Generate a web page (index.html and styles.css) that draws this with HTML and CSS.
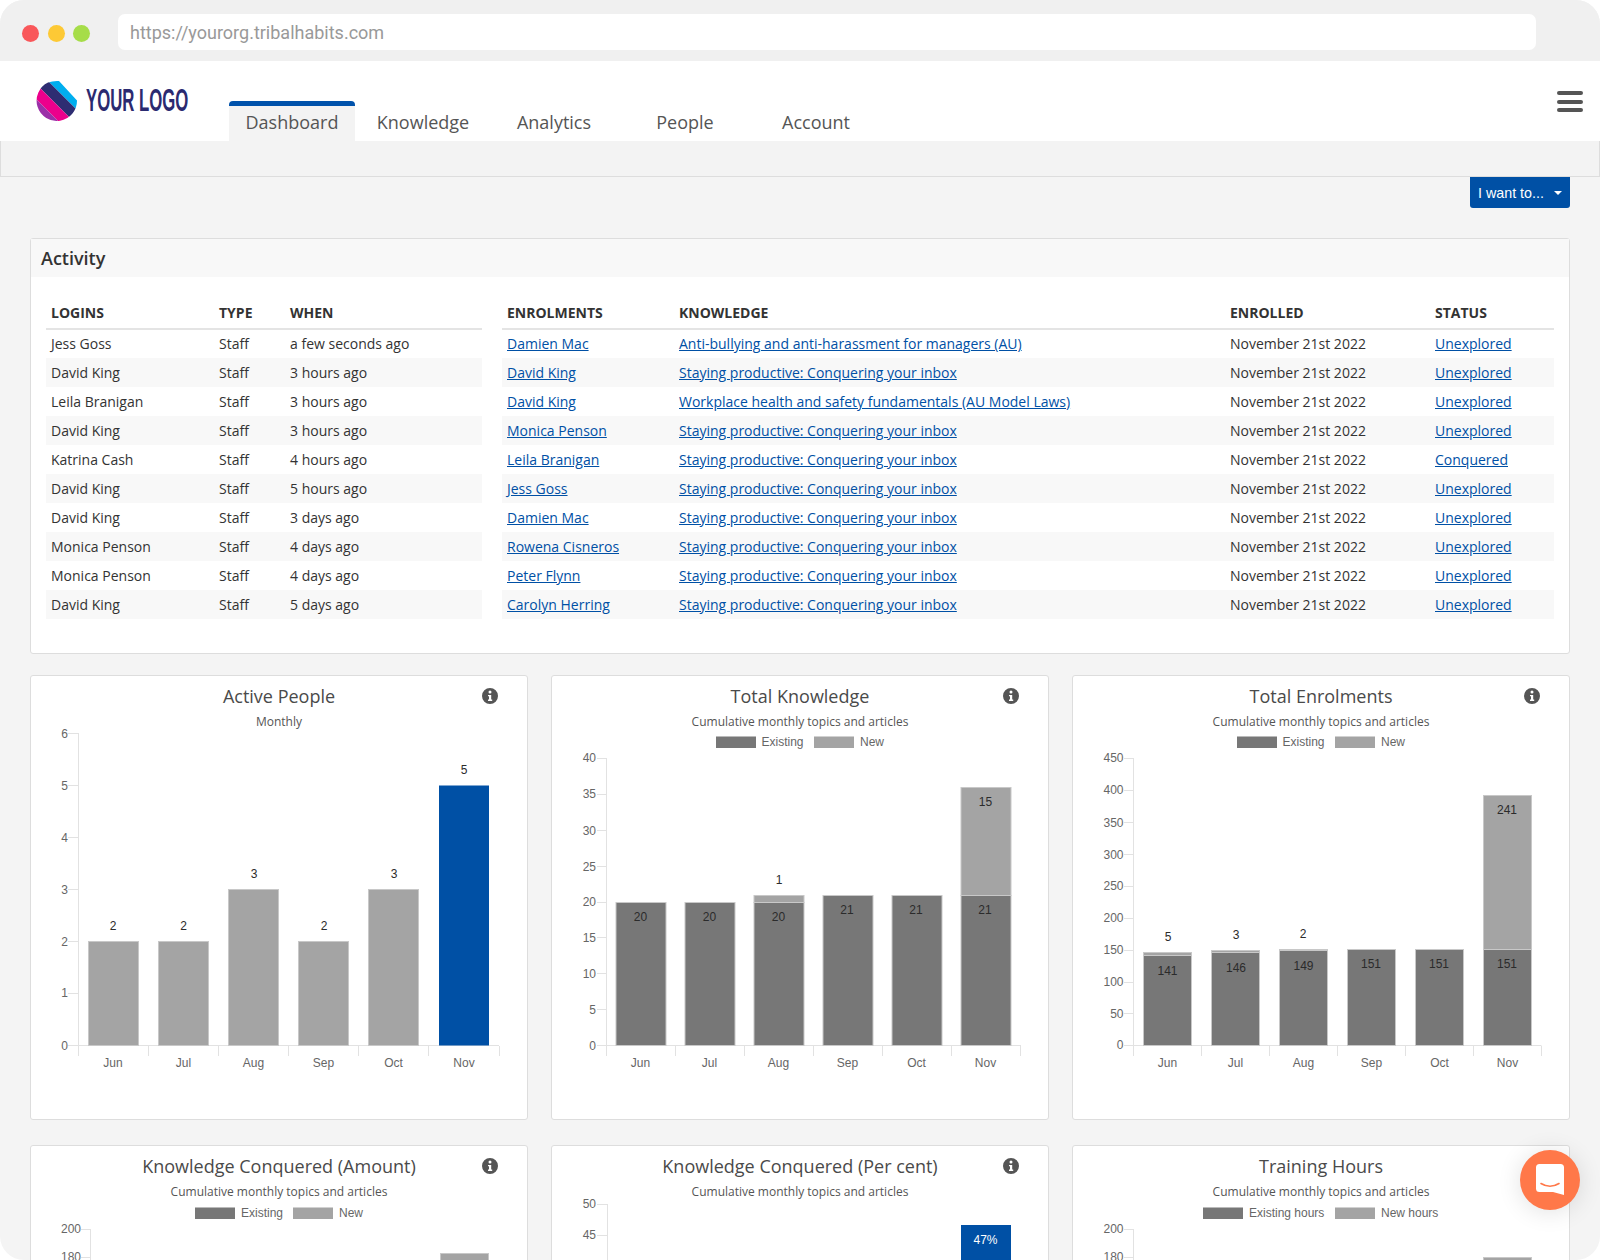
FILE: index.html
```html
<!DOCTYPE html>
<html lang="en">
<head>
<meta charset="utf-8">
<title>Dashboard</title>
<link rel="stylesheet" href="styles.css">
</head>
<body>
<div class="window">
  <div class="browser-bar">
    <div class="dots"><span class="dot dot-red"></span><span class="dot dot-yellow"></span><span class="dot dot-green"></span></div>
    <div class="url">https://yourorg.tribalhabits.com</div>
  </div>

  <header class="site-header">
    <div class="logo">
      <svg class="logo-mark" width="42" height="42" viewBox="0 0 42 42">
        <defs><clipPath id="logoClip"><path d="M12 1.6Q16 0 21 0H23L41 19.5A20.2 20.2 0 1 1 12 1.6Z"/></clipPath></defs>
        <g clip-path="url(#logoClip)">
          <polygon fill="#00aeef" points="2,-10 62,50 100,50 100,-10"/>
          <polygon fill="#2e2d72" points="2,-10 62,50 47,50 -13,-10"/>
          <polygon fill="#ec008c" points="-13,-10 47,50 32,50 -28,-10"/>
          <polygon fill="#9b30a8" points="-28,-10 32,50 -50,50 -50,-10"/>
        </g>
      </svg>
      <span class="logo-text">YOUR LOGO</span>
    </div>
    <nav class="tabs">
      <a class="tab tab-active">Dashboard</a>
      <a class="tab">Knowledge</a>
      <a class="tab">Analytics</a>
      <a class="tab">People</a>
      <a class="tab">Account</a>
    </nav>
    <div class="hamburger"><span></span><span></span><span></span></div>
  </header>

  <div class="subnav"></div>

  <div class="actions">
    <button class="want-btn">I want to...<span class="caret"></span></button>
  </div>

  <main class="content">
    <section class="activity">
      <h2 class="activity-head">Activity</h2>
      <div class="activity-body">
        <table class="tbl tbl-logins">
          <colgroup><col class="c-l1"><col class="c-l2"><col></colgroup>
          <thead><tr><th>Logins</th><th>Type</th><th>When</th></tr></thead>
          <tbody>
            <tr><td>Jess Goss</td><td>Staff</td><td>a few seconds ago</td></tr>
            <tr><td>David King</td><td>Staff</td><td>3 hours ago</td></tr>
            <tr><td>Leila Branigan</td><td>Staff</td><td>3 hours ago</td></tr>
            <tr><td>David King</td><td>Staff</td><td>3 hours ago</td></tr>
            <tr><td>Katrina Cash</td><td>Staff</td><td>4 hours ago</td></tr>
            <tr><td>David King</td><td>Staff</td><td>5 hours ago</td></tr>
            <tr><td>David King</td><td>Staff</td><td>3 days ago</td></tr>
            <tr><td>Monica Penson</td><td>Staff</td><td>4 days ago</td></tr>
            <tr><td>Monica Penson</td><td>Staff</td><td>4 days ago</td></tr>
            <tr><td>David King</td><td>Staff</td><td>5 days ago</td></tr>
          </tbody>
        </table>
        <table class="tbl tbl-enrol">
          <colgroup><col class="c-e1"><col class="c-e2"><col class="c-e3"><col></colgroup>
          <thead><tr><th>Enrolments</th><th>Knowledge</th><th>Enrolled</th><th>Status</th></tr></thead>
          <tbody>
            <tr><td><a href="#">Damien Mac</a></td><td><a href="#">Anti-bullying and anti-harassment for managers (AU)</a></td><td>November 21st 2022</td><td><a href="#">Unexplored</a></td></tr>
            <tr><td><a href="#">David King</a></td><td><a href="#">Staying productive: Conquering your inbox</a></td><td>November 21st 2022</td><td><a href="#">Unexplored</a></td></tr>
            <tr><td><a href="#">David King</a></td><td><a href="#">Workplace health and safety fundamentals (AU Model Laws)</a></td><td>November 21st 2022</td><td><a href="#">Unexplored</a></td></tr>
            <tr><td><a href="#">Monica Penson</a></td><td><a href="#">Staying productive: Conquering your inbox</a></td><td>November 21st 2022</td><td><a href="#">Unexplored</a></td></tr>
            <tr><td><a href="#">Leila Branigan</a></td><td><a href="#">Staying productive: Conquering your inbox</a></td><td>November 21st 2022</td><td><a href="#">Conquered</a></td></tr>
            <tr><td><a href="#">Jess Goss</a></td><td><a href="#">Staying productive: Conquering your inbox</a></td><td>November 21st 2022</td><td><a href="#">Unexplored</a></td></tr>
            <tr><td><a href="#">Damien Mac</a></td><td><a href="#">Staying productive: Conquering your inbox</a></td><td>November 21st 2022</td><td><a href="#">Unexplored</a></td></tr>
            <tr><td><a href="#">Rowena Cisneros</a></td><td><a href="#">Staying productive: Conquering your inbox</a></td><td>November 21st 2022</td><td><a href="#">Unexplored</a></td></tr>
            <tr><td><a href="#">Peter Flynn</a></td><td><a href="#">Staying productive: Conquering your inbox</a></td><td>November 21st 2022</td><td><a href="#">Unexplored</a></td></tr>
            <tr><td><a href="#">Carolyn Herring</a></td><td><a href="#">Staying productive: Conquering your inbox</a></td><td>November 21st 2022</td><td><a href="#">Unexplored</a></td></tr>
          </tbody>
        </table>
      </div>
    </section>

    <div class="chart-grid">
      <!-- Active People -->
      <article class="chart-card">
        <svg class="info" viewBox="0 0 16 16"><path fill-rule="evenodd" d="M8 0a8 8 0 1 1 0 16A8 8 0 0 1 8 0ZM8 2.6a1.5 1.5 0 1 0 0 3 1.5 1.5 0 0 0 0-3ZM6 6.9v1.4h1v3.3H6V13h4.2v-1.4H9.2V6.9Z"/></svg>
        <h3 class="chart-title">Active People</h3>
        <p class="chart-sub">Monthly</p>
        <svg class="chart" viewBox="31 728 496 391">
          <path class="axis" d="M78.5 733V1056M68 733.5H78M68 785.5H78M68 837.5H78M68 889.5H78M68 941.5H78M68 993.5H78M68 1045.5H499M148.5 1046V1056M218.5 1046V1056M288.5 1046V1056M358.5 1046V1056M428.5 1046V1056M499.5 1046V1056"/>
          <g class="tick-y">
            <text x="68" y="734">6</text><text x="68" y="786">5</text><text x="68" y="838">4</text><text x="68" y="890">3</text><text x="68" y="942">2</text><text x="68" y="993">1</text><text x="68" y="1045.5">0</text>
          </g>
          <g class="tick-x">
            <text x="113" y="1063">Jun</text><text x="183.5" y="1063">Jul</text><text x="253.5" y="1063">Aug</text><text x="323.5" y="1063">Sep</text><text x="393.5" y="1063">Oct</text><text x="464" y="1063">Nov</text>
          </g>
          <rect class="bar-light" x="88.5" y="941.5" width="50" height="104"/>
          <rect class="bar-light" x="158.5" y="941.5" width="50" height="104"/>
          <rect class="bar-light" x="228.5" y="889.5" width="50" height="156"/>
          <rect class="bar-light" x="298.5" y="941.5" width="50" height="104"/>
          <rect class="bar-light" x="368.5" y="889.5" width="50" height="156"/>
          <rect class="bar-blue" x="439" y="785.5" width="50" height="260"/>
          <g class="val">
            <text x="113" y="926">2</text><text x="183.5" y="926">2</text><text x="254" y="874">3</text><text x="324" y="926">2</text><text x="394" y="874">3</text><text x="464" y="770">5</text>
          </g>
        </svg>
      </article>

      <!-- Total Knowledge -->
      <article class="chart-card">
        <svg class="info" viewBox="0 0 16 16"><path fill-rule="evenodd" d="M8 0a8 8 0 1 1 0 16A8 8 0 0 1 8 0ZM8 2.6a1.5 1.5 0 1 0 0 3 1.5 1.5 0 0 0 0-3ZM6 6.9v1.4h1v3.3H6V13h4.2v-1.4H9.2V6.9Z"/></svg>
        <h3 class="chart-title">Total Knowledge</h3>
        <p class="chart-sub">Cumulative monthly topics and articles</p>
        <svg class="chart" viewBox="552 728 496 391">
          <rect class="swatch-dark" x="716" y="736.5" width="40" height="11.5"/><text class="legend" x="761.5" y="742">Existing</text>
          <rect class="swatch-light" x="814" y="736.5" width="40" height="11.5"/><text class="legend" x="860" y="742">New</text>
          <path class="axis" d="M606.5 758V1056M597 758.5H607M597 794.5H607M597 830.5H607M597 866.5H607M597 902.5H607M597 937.5H607M597 973.5H607M597 1009.5H607M597 1045.5H1021M675.5 1046V1056M744.5 1046V1056M813.5 1046V1056M882.5 1046V1056M951.5 1046V1056M1020.5 1046V1056"/>
          <g class="tick-y">
            <text x="596" y="758">40</text><text x="596" y="794">35</text><text x="596" y="830.5">30</text><text x="596" y="866.5">25</text><text x="596" y="902">20</text><text x="596" y="938">15</text><text x="596" y="974">10</text><text x="596" y="1009.5">5</text><text x="596" y="1046">0</text>
          </g>
          <g class="tick-x">
            <text x="640.5" y="1063">Jun</text><text x="709.5" y="1063">Jul</text><text x="778.5" y="1063">Aug</text><text x="847.5" y="1063">Sep</text><text x="916.5" y="1063">Oct</text><text x="985.5" y="1063">Nov</text>
          </g>
          <rect class="bar-dark" x="616" y="902.5" width="50" height="143"/>
          <rect class="bar-dark" x="685" y="902.5" width="50" height="143"/>
          <rect class="bar-light" x="754" y="895.5" width="50" height="7"/>
          <rect class="bar-dark" x="754" y="902.5" width="50" height="143"/>
          <rect class="bar-dark" x="823" y="895.5" width="50" height="150"/>
          <rect class="bar-dark" x="892" y="895.5" width="50" height="150"/>
          <rect class="bar-light" x="961" y="787.5" width="50" height="108"/>
          <rect class="bar-dark" x="961" y="895.5" width="50" height="150"/>
          <g class="val">
            <text x="640.5" y="917">20</text><text x="709.5" y="917">20</text><text x="778.5" y="917">20</text><text x="779" y="880">1</text><text x="847" y="910">21</text><text x="916" y="910">21</text><text x="985" y="910">21</text><text x="985.5" y="802">15</text>
          </g>
        </svg>
      </article>

      <!-- Total Enrolments -->
      <article class="chart-card">
        <svg class="info" viewBox="0 0 16 16"><path fill-rule="evenodd" d="M8 0a8 8 0 1 1 0 16A8 8 0 0 1 8 0ZM8 2.6a1.5 1.5 0 1 0 0 3 1.5 1.5 0 0 0 0-3ZM6 6.9v1.4h1v3.3H6V13h4.2v-1.4H9.2V6.9Z"/></svg>
        <h3 class="chart-title">Total Enrolments</h3>
        <p class="chart-sub">Cumulative monthly topics and articles</p>
        <svg class="chart" viewBox="1073 728 496 391">
          <rect class="swatch-dark" x="1237" y="736.5" width="40" height="11.5"/><text class="legend" x="1282.5" y="742">Existing</text>
          <rect class="swatch-light" x="1335" y="736.5" width="40" height="11.5"/><text class="legend" x="1381" y="742">New</text>
          <path class="axis" d="M1133.5 758V1056M1124 758.5H1134M1124 790.5H1134M1124 822.5H1134M1124 854.5H1134M1124 886.5H1134M1124 918.5H1134M1124 950.5H1134M1124 982.5H1134M1124 1013.5H1134M1124 1045.5H1541.5M1201.5 1046V1056M1269.5 1046V1056M1337.5 1046V1056M1405.5 1046V1056M1473.5 1046V1056M1541.5 1046V1056"/>
          <g class="tick-y">
            <text x="1123.5" y="758">450</text><text x="1123.5" y="790">400</text><text x="1123.5" y="822.5">350</text><text x="1123.5" y="854.5">300</text><text x="1123.5" y="886">250</text><text x="1123.5" y="918">200</text><text x="1123.5" y="950">150</text><text x="1123.5" y="982">100</text><text x="1123.5" y="1014">50</text><text x="1123.5" y="1045">0</text>
          </g>
          <g class="tick-x">
            <text x="1167.5" y="1063">Jun</text><text x="1235.5" y="1063">Jul</text><text x="1303.5" y="1063">Aug</text><text x="1371.5" y="1063">Sep</text><text x="1439.5" y="1063">Oct</text><text x="1507.5" y="1063">Nov</text>
          </g>
          <rect class="bar-light" x="1143.5" y="952.5" width="48" height="3"/>
          <rect class="bar-dark" x="1143.5" y="955.5" width="48" height="90"/>
          <rect class="bar-light" x="1211.5" y="950.5" width="48" height="2"/>
          <rect class="bar-dark" x="1211.5" y="952.5" width="48" height="93"/>
          <rect class="bar-light" x="1279.5" y="949.5" width="48" height="1"/>
          <rect class="bar-dark" x="1279.5" y="950.5" width="48" height="95"/>
          <rect class="bar-dark" x="1347.5" y="949.5" width="48" height="96"/>
          <rect class="bar-dark" x="1415.5" y="949.5" width="48" height="96"/>
          <rect class="bar-light" x="1483.5" y="795.5" width="48" height="154"/>
          <rect class="bar-dark" x="1483.5" y="949.5" width="48" height="96"/>
          <g class="val">
            <text x="1168" y="937">5</text><text x="1236" y="935">3</text><text x="1303" y="934">2</text>
            <text x="1167.5" y="971">141</text><text x="1236" y="968">146</text><text x="1303.5" y="966">149</text><text x="1371" y="964">151</text><text x="1439" y="964">151</text><text x="1507" y="964">151</text><text x="1507" y="810">241</text>
          </g>
        </svg>
      </article>

      <!-- Knowledge Conquered (Amount) -->
      <article class="chart-card">
        <svg class="info" viewBox="0 0 16 16"><path fill-rule="evenodd" d="M8 0a8 8 0 1 1 0 16A8 8 0 0 1 8 0ZM8 2.6a1.5 1.5 0 1 0 0 3 1.5 1.5 0 0 0 0-3ZM6 6.9v1.4h1v3.3H6V13h4.2v-1.4H9.2V6.9Z"/></svg>
        <h3 class="chart-title">Knowledge Conquered (Amount)</h3>
        <p class="chart-sub">Cumulative monthly topics and articles</p>
        <svg class="chart" viewBox="31 1198 496 391">
          <rect class="swatch-dark" x="195" y="1207.5" width="40" height="11.5"/><text class="legend" x="241" y="1213">Existing</text>
          <rect class="swatch-light" x="293" y="1207.5" width="40" height="11.5"/><text class="legend" x="339" y="1213">New</text>
          <path class="axis" d="M90.5 1229V1300M81 1229.5H91M81 1257.5H91"/>
          <g class="tick-y"><text x="81" y="1229">200</text><text x="81" y="1257">180</text></g>
          <rect class="bar-light" x="440.5" y="1253.5" width="48" height="60"/>
        </svg>
      </article>

      <!-- Knowledge Conquered (Per cent) -->
      <article class="chart-card">
        <svg class="info" viewBox="0 0 16 16"><path fill-rule="evenodd" d="M8 0a8 8 0 1 1 0 16A8 8 0 0 1 8 0ZM8 2.6a1.5 1.5 0 1 0 0 3 1.5 1.5 0 0 0 0-3ZM6 6.9v1.4h1v3.3H6V13h4.2v-1.4H9.2V6.9Z"/></svg>
        <h3 class="chart-title">Knowledge Conquered (Per cent)</h3>
        <p class="chart-sub">Cumulative monthly topics and articles</p>
        <svg class="chart" viewBox="552 1198 496 391">
          <path class="axis" d="M607.5 1204V1300M597 1204.5H607M597 1235.5H607"/>
          <g class="tick-y"><text x="596" y="1204">50</text><text x="596" y="1235">45</text></g>
          <rect class="bar-blue" x="961" y="1225" width="50" height="80"/>
          <text class="val-white" x="985.5" y="1240">47%</text>
        </svg>
      </article>

      <!-- Training Hours -->
      <article class="chart-card">
        <h3 class="chart-title">Training Hours</h3>
        <p class="chart-sub">Cumulative monthly topics and articles</p>
        <svg class="chart" viewBox="1073 1198 496 391">
          <rect class="swatch-dark" x="1203" y="1207.5" width="40" height="11.5"/><text class="legend" x="1249" y="1213">Existing hours</text>
          <rect class="swatch-light" x="1335" y="1207.5" width="40" height="11.5"/><text class="legend" x="1381" y="1213">New hours</text>
          <path class="axis" d="M1133.5 1229V1300M1124 1229.5H1134M1124 1257.5H1134"/>
          <g class="tick-y"><text x="1123.5" y="1229">200</text><text x="1123.5" y="1257">180</text></g>
          <rect class="bar-light" x="1483.5" y="1257.5" width="48" height="60"/>
        </svg>
      </article>
    </div>
  </main>

  <div class="chat-bubble">
    <svg width="60" height="60" viewBox="0 0 60 60">
      <path fill="#fff" d="M19.5 14h21a3.5 3.5 0 0 1 3.5 3.5V45l-11-3H19.5a3.5 3.5 0 0 1-3.5-3.5v-21a3.5 3.5 0 0 1 3.5-3.5z"/>
      <path fill="none" stroke="#ff7849" stroke-width="1.6" stroke-linecap="round" d="M21 33.5c5.5 3.4 12.5 3.4 18 0"/>
    </svg>
  </div>
</div>
</body>
</html>
```

FILE: styles.css
```css
* { box-sizing: border-box; }
html, body { margin: 0; padding: 0; background: #fff; }
body { font-family: "Open Sans", sans-serif; color: #333; }

.window {
  position: relative;
  width: 1600px;
  height: 1260px;
  overflow: hidden;
  border-radius: 24px;
  background: #f4f4f4;
}

/* browser chrome */
.browser-bar {
  height: 61px;
  background: #f0f0f0;
  display: flex;
  align-items: flex-start;
  padding: 14px 64px 0 22px;
}
.dots { display: flex; gap: 8.5px; width: 96px; padding-top: 10.5px; flex: none; }
.dot { width: 17px; height: 17px; border-radius: 50%; }
.dot-red { background: #f9575a; }
.dot-yellow { background: #fdc935; }
.dot-green { background: #a6dd49; }
.url {
  flex: 1;
  height: 36px;
  border-radius: 7px;
  background: #fff;
  padding: 1px 0 0 12px;
  font: 18px/36px Roboto, sans-serif;
  color: #999;
}

/* header */
.site-header {
  height: 80px;
  background: #fff;
  display: flex;
  align-items: flex-start;
}
.logo { width: 229px; flex: none; display: flex; align-items: flex-start; padding: 20px 0 0 36px; }
.logo-mark { flex: none; }
.logo-text {
  display: inline-block;
  margin: 3px 0 0 8px;
  font: bold 31px/34px "Liberation Sans", sans-serif;
  color: #2b2a70;
  white-space: nowrap;
  transform: scaleX(.54);
  transform-origin: left center;
}
.tabs { display: flex; gap: 5px; align-self: flex-end; }
.tab {
  width: 126px;
  height: 40px;
  border-top: 5px solid transparent;
  border-radius: 4px 4px 0 0;
  text-align: center;
  font-size: 18px;
  line-height: 33px;
  color: #555;
}
.tab-active { background: #f3f3f3; border-top-color: #0052ab; }
.hamburger { margin-left: auto; margin-right: 17px; padding-top: 30px; display: flex; flex-direction: column; gap: 4.5px; }
.hamburger span { display: block; width: 26px; height: 4px; border-radius: 2px; background: #555; }

.subnav {
  height: 36px;
  border: 1px solid #ddd;
  border-top: 0;
  background: #f3f3f3;
}

/* action row */
.actions { display: flex; justify-content: flex-end; padding: 0 30px; margin-bottom: 30px; }
.want-btn {
  width: 100px;
  height: 31px;
  border: 0;
  border-radius: 0 0 3px 3px;
  background: #0050a5;
  color: #fff;
  font: 14.3px/31px "Liberation Sans", sans-serif;
  text-align: left;
  padding: 1px 0 0 8px;
  display: flex;
  align-items: center;
}
.caret {
  margin-left: 10px;
  width: 0;
  height: 0;
  border-left: 4.5px solid transparent;
  border-right: 4.5px solid transparent;
  border-top: 4.5px solid #fff;
}

/* content */
.content { padding: 0 30px; }
.activity {
  background: #fff;
  border: 1px solid #ddd;
  border-radius: 3px;
  margin-bottom: 21px;
}
.activity-head {
  margin: 0;
  height: 38px;
  background: #f8f8f8;
  padding-left: 10px;
  font-size: 18px;
  font-weight: 600;
  line-height: 38px;
  color: #333;
}
.activity-body { display: flex; gap: 20px; padding: 23px 15px 34px; }
.tbl { border-collapse: collapse; table-layout: fixed; font-size: 14px; }
.tbl-logins { width: 436px; flex: none; }
.tbl-enrol { width: 1052px; flex: none; }
.c-l1 { width: 168px; }
.c-l2 { width: 71px; }
.c-e1 { width: 172px; }
.c-e2 { width: 551px; }
.c-e3 { width: 205px; }
.tbl th {
  height: 29px;
  padding: 0 5px 3px;
  text-align: left;
  text-transform: uppercase;
  font-weight: 700;
  border-bottom: 2px solid #e4e4e4;
  color: #333;
}
.tbl td { height: 29px; padding: 0 5px; white-space: nowrap; line-height: 20px; }
.tbl tbody tr:nth-child(even) { background: #f8f8f8; }
.tbl a { color: #0050a5; text-decoration: underline; }

/* charts */
.chart-grid {
  display: grid;
  grid-template-columns: repeat(3, 498px);
  column-gap: 23px;
  row-gap: 25px;
}
.chart-card {
  position: relative;
  height: 445px;
  background: #fff;
  border: 1px solid #ddd;
  border-radius: 3px;
  padding-top: 8px;
  display: flex;
  flex-direction: column;
  align-items: center;
}
.chart-title { margin: 0; font-size: 18px; font-weight: 400; line-height: 24px; color: #4a4a4a; }
.chart-sub { margin: 7px 0 0; font-size: 12px; line-height: 14px; color: #555; }
.chart { display: block; width: 496px; height: 391px; flex: none; margin-top: -1px; overflow: visible; }
.info { position: absolute; top: 12px; right: 29px; width: 16px; height: 16px; fill: #555; }

.chart text { font-family: "Liberation Sans", sans-serif; font-size: 12px; dominant-baseline: central; }
.axis { fill: none; stroke: #e2e2e2; stroke-width: 1; }
.tick-y text { text-anchor: end; fill: #666; }
.tick-x text { text-anchor: middle; fill: #666; }
.val text { text-anchor: middle; fill: #2b2b2b; }
.chart .val-white { text-anchor: middle; fill: #fff; }
.chart .legend { fill: #666; }
.bar-dark, .swatch-dark { fill: #777; stroke: #c8c8c8; stroke-width: 1; }
.bar-light, .swatch-light { fill: #a4a4a4; stroke: #c8c8c8; stroke-width: 1; }
.swatch-dark { stroke-width: 0; }
.swatch-light { stroke-width: 0; }
.bar-blue { fill: #0050a5; }

/* chat launcher */
.chat-bubble {
  position: absolute;
  left: 1520px;
  top: 1150px;
  width: 60px;
  height: 60px;
  border-radius: 50%;
  background: #ff7849;
  box-shadow: 0 2px 24px rgba(0,0,0,.12);
}
.chat-bubble svg { display: block; }
```
